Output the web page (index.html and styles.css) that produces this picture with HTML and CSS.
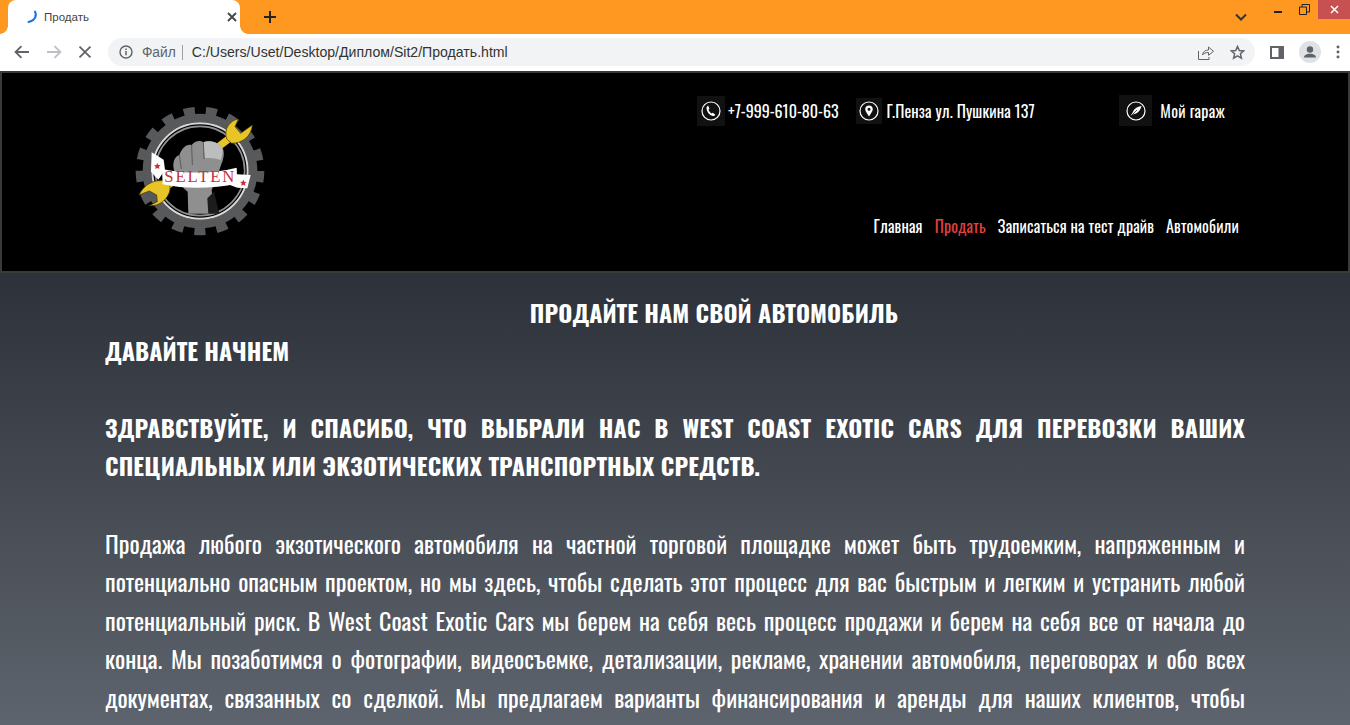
FILE: index.html
```html
<!DOCTYPE html>
<html lang="ru">
<head>
    <meta charset="UTF-8">
    <meta name="viewport" content="width=device-width, initial-scale=1.0">
    <title>Продать</title>
    <link rel="stylesheet" href="styles.css">
</head>
<body>
    <div class="tabbar">
        <div class="tab">
            <svg class="spinner" width="16" height="16" viewBox="0 0 16 16"><path d="M12 2.500c2 3.500 .5 9-6.500 10.500" fill="none" stroke="#1a73e8" stroke-width="2" stroke-linecap="round"/></svg>
            <span class="tab-title">Продать</span>
            <svg class="tab-close" width="10" height="10" viewBox="0 0 10 10"><path d="M1 1l8 8M9 1l-8 8" stroke="#444" stroke-width="1.800"/></svg>
        </div>
        <svg class="new-tab" width="12" height="12" viewBox="0 0 12 12"><path d="M6 0v12M0 6h12" stroke="#222" stroke-width="2"/></svg>
        <svg class="tabs-menu" width="12" height="8" viewBox="0 0 12 8"><path d="M1 1.500l5 5 5-5" fill="none" stroke="#333" stroke-width="2"/></svg>
        <div class="win-btns">
            <svg class="win-min" width="10" height="10" viewBox="0 0 10 10"><path d="M1 8h8" stroke="#222" stroke-width="2"/></svg>
            <svg class="win-max" width="11" height="11" viewBox="0 0 11 11"><path d="M.5 3h7v7.500h-7zM3 3V.5h7.500V8H8" fill="none" stroke="#222"/></svg>
            <div class="win-close"><svg width="9" height="9" viewBox="0 0 9 9"><path d="M1 1l7 7M8 1l-7 7" stroke="#fff" stroke-width="1.500"/></svg></div>
        </div>
    </div>
    <div class="toolbar">
        <svg class="nav-ico" width="16" height="14" viewBox="0 0 16 14"><path d="M15 7H2M7.500 1L1.500 7l6 6" fill="none" stroke="#5f6368" stroke-width="1.800"/></svg>
        <svg class="nav-ico" width="16" height="14" viewBox="0 0 16 14"><path d="M1 7h13M8.500 1l6 6-6 6" fill="none" stroke="#bdc1c6" stroke-width="1.800"/></svg>
        <svg class="nav-ico" width="14" height="14" viewBox="0 0 14 14"><path d="M1.500 1.500l11 11M12.500 1.500l-11 11" stroke="#5f6368" stroke-width="1.800"/></svg>
        <div class="omnibox">
            <svg width="14" height="14" viewBox="0 0 14 14"><circle cx="7" cy="7" r="6" fill="none" stroke="#5f6368" stroke-width="1.400"/><path d="M7 6v4.200M7 3.500v1.400" stroke="#5f6368" stroke-width="1.500"/></svg>
            <span class="scheme">Файл</span>
            <span class="url">C:/Users/Uset/Desktop/Диплом/Sit2/Продать.html</span>
            <svg class="share" width="16" height="15" viewBox="0 0 16 15"><path d="M.5 6v8.500h10.500V12M4.500 10c.5-3.500 3-5 6-5V2l5 4.300-5 4V7.500c-2.500 0-4.500 .5-6 2.500z" fill="none" stroke="#5f6368"/></svg>
            <svg class="star" width="15" height="15" viewBox="0 0 15 15"><path d="M7.500 1.500l1.800 4 4.400 .4-3.300 2.900 1 4.300-3.900-2.300-3.900 2.300 1-4.300L1.300 5.900l4.400-.4z" fill="none" stroke="#5f6368" stroke-width="1.500"/></svg>
        </div>
        <svg class="panel" width="14" height="13" viewBox="0 0 14 13"><rect width="14" height="13" fill="#5f6368"/><rect x="2" y="2" width="6.500" height="9" fill="#fff"/></svg>
        <svg class="avatar" width="22" height="22" viewBox="0 0 22 22"><circle cx="11" cy="11" r="11" fill="#dee1e6"/><circle cx="11" cy="8.500" r="3.200" fill="#5f6368"/><path d="M5 16.500c0-5 12-5 12 0z" fill="#5f6368"/></svg>
        <svg class="dots" width="4" height="14" viewBox="0 0 4 14"><circle cx="2" cy="2" r="1.500" fill="#5f6368"/><circle cx="2" cy="7" r="1.500" fill="#5f6368"/><circle cx="2" cy="12" r="1.500" fill="#5f6368"/></svg>
    </div>

    <header class="site-header">
        <svg class="logo" width="160" height="150" viewBox="0 0 480 450">
            <!-- gear -->
            <circle cx="240" cy="228" r="180" fill="none" stroke="#58595b" stroke-width="26" pathLength="34" stroke-dasharray="1 1"/>
            <circle cx="240" cy="228" r="159" fill="none" stroke="#58595b" stroke-width="26"/>
            <circle cx="240" cy="228" r="143" fill="none" stroke="#d8d8d8" stroke-width="6"/>
            <circle cx="240" cy="228" r="134" fill="none" stroke="#8f8f8f" stroke-width="5"/>
            <!-- wrench -->
            <path d="M125 285L335 125" stroke="#e8c427" stroke-width="22"/>
            <path d="M320 132c-10-30 10-56 35-60l-10 23 17 20 35-25c-2 30-27 55-62 55zM150 262c-35-14-75 0-93 38l31-12 22 12 2 20-24 12c32 3 57-22 62-47z" fill="#e8c427" stroke="#3a3205" stroke-width="2"/>
            <!-- fist -->
            <path d="M205 356l-2-66c-18-15-38-40-43-75 0-20 5-30 18-35 7-20 22-35 37-30 10-12 25-15 35-8 15-7 40-2 55 13 10 10 7 35 0 50-10 30-20 55-30 80l7 71z" fill="#8f8f8f"/>
            <path d="M250 142c15-7 40-2 55 13 5 10 3 25-3 40-15-5-32-8-47-5z" fill="#bdbdbd"/>
            <path d="M178 180l6 42M215 150l2 60M250 142l2 50" stroke="#5a5a5a" stroke-width="3" fill="none"/>
            <path d="M265 356l-3-46 20-20 16 66z" fill="#1c1c1c"/>
            <!-- banner -->
            <path d="M95 172l36 22 4 30-20 30-22-24z" fill="#fff"/>
            <path d="M126 222c70 16 150 14 224-4l2 48c-70 14-150 18-224 2z" fill="#fff"/>
            <path d="M350 238l42 2-10 40-30-2-22-8z" fill="#fff"/>
            <text class="logo-text" x="238" y="261" text-anchor="middle" textLength="210">SELTEN</text>
            <path d="M112 204l3 6 7 1-5 4 1 7-6-3-6 3 1-7-5-4 7-1zM370 254l3 6 7 1-5 4 1 7-6-3-6 3 1-7-5-4 7-1z" fill="#c8303a"/>
        </svg>
        <div class="header-right">
            <div class="contacts">
                <div class="contact phone">
                    <span class="ico-box phone-box">
                        <svg width="20" height="20" viewBox="0 0 20 20"><circle cx="10" cy="10" r="9" fill="none" stroke="#fff" stroke-width="1.200"/><path d="M7 4.500l1.500 3-1 1.200c.5 1.500 1.500 2.800 3 3.800l1.300-.8 2.500 2c-.6 1-1.500 1.500-2.500 1.300-3.500-1-6-4-6.300-8 0-1 .8-1.800 1.500-2.500z" fill="#fff"/></svg>
                    </span>
                    <span class="contact-text">+7-999-610-80-63</span>
                </div>
                <div class="contact">
                    <span class="ico-box pin-box">
                        <svg width="20" height="20" viewBox="0 0 20 20"><circle cx="10" cy="10" r="9" fill="none" stroke="#fff" stroke-width="1.200"/><path fill-rule="evenodd" d="M10 4.500c-2.300 0-3.800 1.700-3.800 3.700 0 2.200 2.500 5 3.800 7.300 1.300-2.300 3.800-5.100 3.800-7.300 0-2-1.500-3.700-3.800-3.700zm0 2.300a1.500 1.500 0 1 1 0 3 1.500 1.500 0 0 1 0-3z" fill="#fff"/></svg>
                    </span>
                    <span class="contact-text">Г.Пенза ул. Пушкина 137</span>
                </div>
                <div class="contact garage">
                    <span class="ico-box garage-box">
                        <svg width="20" height="20" viewBox="0 0 20 20"><circle cx="10" cy="10" r="9" fill="none" stroke="#fff" stroke-width="1.200"/><path d="M15.500 5c-4 .5-7.500 2.500-8.500 6l-2.500 4 3.500-2c3.500-.5 6.500-3.500 7.500-8z" fill="#fff"/><path d="M5 15l6-6" stroke="#111" stroke-width=".7"/></svg>
                    </span>
                    <span class="contact-text">Мой гараж</span>
                </div>
            </div>
            <nav class="main-nav">
                <a href="#">Главная</a>
                <a href="#" class="active">Продать</a>
                <a href="#">Записаться на тест драйв</a>
                <a href="#">Автомобили</a>
            </nav>
        </div>
    </header>

    <main class="content">
        <h1 class="page-title">ПРОДАЙТЕ НАМ СВОЙ АВТОМОБИЛЬ</h1>
        <h2 class="sub-title">ДАВАЙТЕ НАЧНЕМ</h2>
        <h2 class="lead">
            <span class="line">ЗДРАВСТВУЙТЕ, И СПАСИБО, ЧТО ВЫБРАЛИ НАС В WEST COAST EXOTIC CARS ДЛЯ ПЕРЕВОЗКИ ВАШИХ</span>
            СПЕЦИАЛЬНЫХ ИЛИ ЭКЗОТИЧЕСКИХ ТРАНСПОРТНЫХ СРЕДСТВ.
        </h2>
        <p class="text">
            <span class="line">Продажа любого экзотического автомобиля на частной торговой площадке может быть трудоемким, напряженным и</span>
            <span class="line">потенциально опасным проектом, но мы здесь, чтобы сделать этот процесс для вас быстрым и легким и устранить любой</span>
            <span class="line">потенциальный риск. В West Coast Exotic Cars мы берем на себя весь процесс продажи и берем на себя все от начала до</span>
            <span class="line">конца. Мы позаботимся о фотографии, видеосъемке, детализации, рекламе, хранении автомобиля, переговорах и обо всех</span>
            <span class="line">документах, связанных со сделкой. Мы предлагаем варианты финансирования и аренды для наших клиентов, чтобы</span>
        </p>
    </main>
</body>
</html>
```

FILE: styles.css
```css
* {
    box-sizing: border-box;
}

html, body {
    height: 725px;
    overflow: hidden;
}

body {
    margin: 0;
    font-family: "Oswald", "Open Sans", sans-serif;
    background: linear-gradient(#2d3139 0, #2d3139 272px, #5e646d 725px);
    color: #fff;
}

/* browser chrome */
.tabbar {
    height: 34px;
    background-color: #fe9820;
    display: flex;
    align-items: center;
    padding-left: 8px;
    font-family: "Liberation Sans", sans-serif;
}

.tab {
    position: relative;
    width: 232px;
    height: 34px;
    background-color: #fff;
    border-radius: 8px 8px 0 0;
    display: flex;
    align-items: center;
    padding: 0 3px 0 15px;
    font-size: 11.500px;
    color: #444;
}

/* little feet at the bottom corners of the tab */
.tab::before, .tab::after {
    content: "";
    position: absolute;
    bottom: 0;
    width: 8px;
    height: 8px;
}

.tab::before {
    left: -8px;
    background: radial-gradient(circle at 0 0, #fe9820 7.500px, #fff 8px);
}

.tab::after {
    right: -8px;
    background: radial-gradient(circle at 100% 0, #fe9820 7.500px, #fff 8px);
}

.tab-title {
    margin-left: 5px;
    flex: 1;
}

.new-tab {
    margin-left: 24px;
}

.tabs-menu {
    margin-left: auto;
    margin-right: 26px;
}

.win-btns {
    display: flex;
    align-items: flex-start;
    align-self: flex-start;
}

.win-min {
    margin: 4px 16px 0 0;
}

.win-max {
    margin: 4px 8px 0 0;
}

.win-close {
    width: 32px;
    height: 19px;
    background-color: #c75050;
    display: flex;
    align-items: center;
    justify-content: center;
}

.toolbar {
    height: 37px;
    background-color: #fff;
    display: flex;
    align-items: center;
    padding: 0 10px 1px 14px;
    gap: 16px;
    font-family: "Liberation Sans", sans-serif;
}

.omnibox {
    width: 1150px;
    height: 28px;
    background-color: #f1f3f4;
    border-radius: 14px;
    display: flex;
    align-items: center;
    padding: 0 10px 0 11px;
    font-size: 14.100px;
}

.scheme {
    margin-left: 9px;
    padding-right: 6px;
    border-right: 1px solid #9aa0a6;
    color: #5f6368;
    font-size: 13.800px;
}

.url {
    margin-left: 9px;
    color: #333;
}

.share {
    margin-left: auto;
}

.star {
    margin-left: 16px;
}

.panel {
    margin-left: -1px;
}

.avatar {
    margin-left: -1px;
}

.dots {
    margin-left: -1px;
}

/* site header */
.site-header {
    height: 202px;
    background-color: #000;
    border: 2px solid #3a3a3a;
    display: flex;
    padding: 22px 109px 0 118px;
}

.logo {
    flex: none;
}

.header-right {
    margin-left: auto;
    width: 542px;
    display: flex;
    flex-direction: column;
}

.contacts {
    display: flex;
    align-items: center;
    height: 31px;
}

.contact {
    display: flex;
    align-items: center;
    font-size: 16px;
    letter-spacing: .13px;
    white-space: nowrap;
}

.contact.phone {
    letter-spacing: 0;
}

.garage {
    margin-left: auto;
    margin-right: 14px;
    letter-spacing: .25px;
}

.ico-box {
    display: flex;
    align-items: center;
    justify-content: center;
    background-color: #111;
}

.phone-box {
    width: 28px;
    height: 30px;
    margin-right: 3px;
}

.pin-box {
    width: 26px;
    height: 26px;
    margin-left: 17px;
    margin-right: 5px;
}

.garage-box {
    width: 33px;
    height: 31px;
    margin-right: 8px;
}

.main-nav {
    display: flex;
    justify-content: flex-end;
    gap: 12px;
    margin-top: 88px;
    font-size: 16px;
    letter-spacing: .15px;
}

.main-nav a {
    color: #fff;
    text-decoration: none;
}

.main-nav a.active {
    color: #e0403f;
}

/* page text */
.content {
    width: 1140px;
    margin-left: 105px;
}

.page-title, .sub-title, .lead {
    margin: 0;
    font-weight: 700;
    font-size: 24px;
    letter-spacing: .1px;
}

.page-title {
    text-align: center;
    padding: 20px 0 0 78px;
    line-height: 38px;
}

.sub-title {
    line-height: 38px;
}

.lead {
    margin-top: 39px;
    line-height: 38px;
    letter-spacing: .16px;
}

.text {
    margin: 40px 0 0;
    font-size: 24px;
    line-height: 38.400px;
}

.line {
    display: block;
    text-align: justify;
    text-align-last: justify;
}

.logo-text {
    font-family: "Liberation Serif", serif;
    font-size: 50px;
    fill: #c8303a;
}
```
